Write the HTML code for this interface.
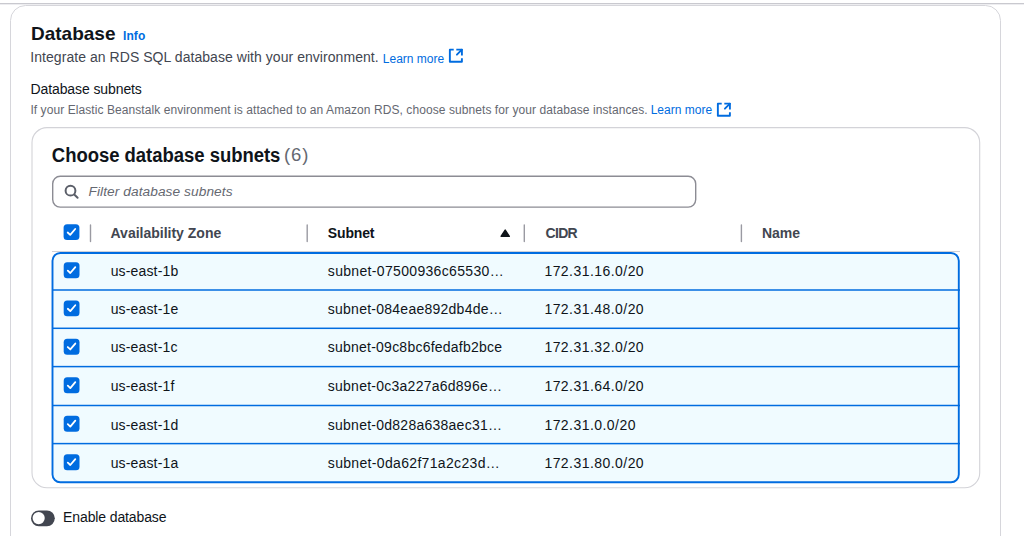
<!DOCTYPE html>
<html><head><meta charset="utf-8"><style>
html,body{margin:0;padding:0;background:#fff;width:1024px;height:536px;overflow:hidden;}
body{position:relative;font-family:"Liberation Sans",sans-serif;}
svg{position:absolute;left:0;top:0;}
.t{position:absolute;white-space:nowrap;}
</style></head><body>
<svg width="1024" height="536" viewBox="0 0 1024 536">
<rect x="0" y="3" width="1024" height="1" fill="#c9c9cf"/>
<rect x="0" y="4" width="1024" height="1" fill="#ededf0"/>
<rect x="10.5" y="5.5" width="990" height="700" rx="15" fill="#fff" stroke="#d6d6db" stroke-width="1"/>
<rect x="32" y="127.6" width="947.7" height="360.2" rx="15" fill="#fff" stroke="#d3d3d8" stroke-width="1.1"/>
<rect x="52.7" y="176.3" width="643" height="30.8" rx="7.5" fill="#fff" stroke="#8c8c94" stroke-width="1.4"/>
<g fill="none" stroke="#5b5f69" stroke-width="2" stroke-linecap="round"><circle cx="70.5" cy="190.7" r="4.9"/><path d="M74.5 194.7 L77.6 197.8"/></g>
<g transform="translate(449,48.8) scale(0.86)" fill="none" stroke="#006ce0" stroke-width="2.2" stroke-linejoin="round"><path d="M5.5 1H1v14h14v-4"/><path d="M8.5 1H15V7.8"/><path d="M15 1L9.2 6.8" stroke-linecap="round"/></g>
<g transform="translate(717,102.8) scale(0.86)" fill="none" stroke="#006ce0" stroke-width="2.2" stroke-linejoin="round"><path d="M5.5 1H1v14h14v-4"/><path d="M8.5 1H15V7.8"/><path d="M15 1L9.2 6.8" stroke-linecap="round"/></g>
<rect x="63.6" y="224.2" width="15.8" height="15.9" rx="3.5" fill="#006ce0"/><path d="M67.70 232.50 L70.20 234.90 L75.20 229.00" fill="none" stroke="#fff" stroke-width="1.8" stroke-linecap="round" stroke-linejoin="round"/>
<line x1="90.5" y1="225" x2="90.5" y2="241.6" stroke="#9a9aa2" stroke-width="1.4" stroke-linecap="round"/>
<line x1="307.2" y1="225" x2="307.2" y2="241.6" stroke="#9a9aa2" stroke-width="1.4" stroke-linecap="round"/>
<line x1="524.3" y1="225" x2="524.3" y2="241.6" stroke="#9a9aa2" stroke-width="1.4" stroke-linecap="round"/>
<line x1="741.4" y1="225" x2="741.4" y2="241.6" stroke="#9a9aa2" stroke-width="1.4" stroke-linecap="round"/>
<path d="M501.1 236.3 L505.2 230.1 L509.3 236.3 Z" fill="#0f141a" stroke="#0f141a" stroke-width="1.5" stroke-linejoin="round"/>
<rect x="52" y="251" width="908" height="1" fill="#d0d0d6"/>
<rect x="52.5" y="253.0" width="906.3" height="229.3" rx="7.8" fill="#f0fbff" stroke="#006ce0" stroke-width="1.9"/>
<rect x="52" y="289.25" width="908" height="1.5" fill="#006ce0"/>
<rect x="52" y="327.55" width="908" height="1.5" fill="#006ce0"/>
<rect x="52" y="365.85" width="908" height="1.5" fill="#006ce0"/>
<rect x="52" y="404.75" width="908" height="1.5" fill="#006ce0"/>
<rect x="52" y="442.85" width="908" height="1.5" fill="#006ce0"/>
<rect x="63.7" y="262.3" width="15.8" height="15.9" rx="3.5" fill="#006ce0"/><path d="M67.80 270.60 L70.30 273.00 L75.30 267.10" fill="none" stroke="#fff" stroke-width="1.8" stroke-linecap="round" stroke-linejoin="round"/>
<rect x="63.7" y="300.45" width="15.8" height="15.9" rx="3.5" fill="#006ce0"/><path d="M67.80 308.75 L70.30 311.15 L75.30 305.25" fill="none" stroke="#fff" stroke-width="1.8" stroke-linecap="round" stroke-linejoin="round"/>
<rect x="63.7" y="338.75000000000006" width="15.8" height="15.9" rx="3.5" fill="#006ce0"/><path d="M67.80 347.05 L70.30 349.45 L75.30 343.55" fill="none" stroke="#fff" stroke-width="1.8" stroke-linecap="round" stroke-linejoin="round"/>
<rect x="63.7" y="377.35" width="15.8" height="15.9" rx="3.5" fill="#006ce0"/><path d="M67.80 385.65 L70.30 388.05 L75.30 382.15" fill="none" stroke="#fff" stroke-width="1.8" stroke-linecap="round" stroke-linejoin="round"/>
<rect x="63.7" y="415.85" width="15.8" height="15.9" rx="3.5" fill="#006ce0"/><path d="M67.80 424.15 L70.30 426.55 L75.30 420.65" fill="none" stroke="#fff" stroke-width="1.8" stroke-linecap="round" stroke-linejoin="round"/>
<rect x="63.7" y="454.3" width="15.8" height="15.9" rx="3.5" fill="#006ce0"/><path d="M67.80 462.60 L70.30 465.00 L75.30 459.10" fill="none" stroke="#fff" stroke-width="1.8" stroke-linecap="round" stroke-linejoin="round"/>
<rect x="31" y="510.5" width="23.8" height="15.7" rx="7.85" fill="#424650"/>
<circle cx="38.65" cy="518.1" r="6.1" fill="#fff"/>
</svg>
<div class="t" style="left:31.00px;top:24.01px;font-size:19px;line-height:19px;color:#0f141a;font-weight:bold;font-style:normal;letter-spacing:0px;">Database</div>
<div class="t" style="left:123.00px;top:30.24px;font-size:12px;line-height:12px;color:#006ce0;font-weight:bold;font-style:normal;letter-spacing:0.1px;">Info</div>
<div class="t" style="left:30.30px;top:50.05px;font-size:14px;line-height:14px;color:#424650;font-weight:normal;font-style:normal;letter-spacing:0.05px;">Integrate an RDS SQL database with your environment.</div>
<div class="t" style="left:382.80px;top:52.54px;font-size:12px;line-height:12px;color:#006ce0;font-weight:normal;font-style:normal;letter-spacing:0px;">Learn more</div>
<div class="t" style="left:30.50px;top:81.65px;font-size:14px;line-height:14px;color:#0f141a;font-weight:normal;font-style:normal;letter-spacing:-0.1px;">Database subnets</div>
<div class="t" style="left:30.40px;top:103.64px;font-size:12px;line-height:12px;color:#656871;font-weight:normal;font-style:normal;letter-spacing:0.075px;">If your Elastic Beanstalk environment is attached to an Amazon RDS, choose subnets for your database instances.</div>
<div class="t" style="left:650.70px;top:103.64px;font-size:12px;line-height:12px;color:#006ce0;font-weight:normal;font-style:normal;letter-spacing:0px;">Learn more</div>
<div class="t" style="left:51.80px;top:146.84px;font-size:18.5px;line-height:18.5px;color:#0f141a;font-weight:bold;font-style:normal;letter-spacing:-0.03px;transform:scaleY(1.06);transform-origin:0 15.66px;">Choose database subnets</div>
<div class="t" style="left:283.90px;top:146.24px;font-size:18.5px;line-height:18.5px;color:#656871;font-weight:normal;font-style:normal;letter-spacing:0.9px;">(6)</div>
<div class="t" style="left:88.50px;top:184.90px;font-size:13.7px;line-height:13.7px;color:#656871;font-weight:normal;font-style:italic;letter-spacing:0.08px;">Filter database subnets</div>
<div class="t" style="left:110.50px;top:225.85px;font-size:14px;line-height:14px;color:#424650;font-weight:bold;font-style:normal;letter-spacing:0px;">Availability Zone</div>
<div class="t" style="left:327.80px;top:225.85px;font-size:14px;line-height:14px;color:#0f141a;font-weight:bold;font-style:normal;letter-spacing:-0.15px;">Subnet</div>
<div class="t" style="left:545.60px;top:225.85px;font-size:14px;line-height:14px;color:#424650;font-weight:bold;font-style:normal;letter-spacing:-0.7px;">CIDR</div>
<div class="t" style="left:761.90px;top:225.85px;font-size:14px;line-height:14px;color:#424650;font-weight:bold;font-style:normal;letter-spacing:0px;">Name</div>
<div class="t" style="left:110.70px;top:263.95px;font-size:14px;line-height:14px;color:#0f141a;font-weight:normal;font-style:normal;letter-spacing:0.15px;">us-east-1b</div>
<div class="t" style="left:327.80px;top:263.95px;font-size:14px;line-height:14px;color:#0f141a;font-weight:normal;font-style:normal;letter-spacing:0.33px;">subnet-07500936c65530…</div>
<div class="t" style="left:544.40px;top:263.95px;font-size:14px;line-height:14px;color:#0f141a;font-weight:normal;font-style:normal;letter-spacing:0.45px;">172.31.16.0/20</div>
<div class="t" style="left:110.70px;top:302.10px;font-size:14px;line-height:14px;color:#0f141a;font-weight:normal;font-style:normal;letter-spacing:0.15px;">us-east-1e</div>
<div class="t" style="left:327.80px;top:302.10px;font-size:14px;line-height:14px;color:#0f141a;font-weight:normal;font-style:normal;letter-spacing:0.25px;">subnet-084eae892db4de…</div>
<div class="t" style="left:544.40px;top:302.10px;font-size:14px;line-height:14px;color:#0f141a;font-weight:normal;font-style:normal;letter-spacing:0.45px;">172.31.48.0/20</div>
<div class="t" style="left:110.70px;top:340.40px;font-size:14px;line-height:14px;color:#0f141a;font-weight:normal;font-style:normal;letter-spacing:0.15px;">us-east-1c</div>
<div class="t" style="left:327.80px;top:340.40px;font-size:14px;line-height:14px;color:#0f141a;font-weight:normal;font-style:normal;letter-spacing:0.23px;">subnet-09c8bc6fedafb2bce</div>
<div class="t" style="left:544.40px;top:340.40px;font-size:14px;line-height:14px;color:#0f141a;font-weight:normal;font-style:normal;letter-spacing:0.45px;">172.31.32.0/20</div>
<div class="t" style="left:110.70px;top:379.00px;font-size:14px;line-height:14px;color:#0f141a;font-weight:normal;font-style:normal;letter-spacing:0.15px;">us-east-1f</div>
<div class="t" style="left:327.80px;top:379.00px;font-size:14px;line-height:14px;color:#0f141a;font-weight:normal;font-style:normal;letter-spacing:0.25px;">subnet-0c3a227a6d896e…</div>
<div class="t" style="left:544.40px;top:379.00px;font-size:14px;line-height:14px;color:#0f141a;font-weight:normal;font-style:normal;letter-spacing:0.45px;">172.31.64.0/20</div>
<div class="t" style="left:110.70px;top:417.50px;font-size:14px;line-height:14px;color:#0f141a;font-weight:normal;font-style:normal;letter-spacing:0.15px;">us-east-1d</div>
<div class="t" style="left:327.80px;top:417.50px;font-size:14px;line-height:14px;color:#0f141a;font-weight:normal;font-style:normal;letter-spacing:0.25px;">subnet-0d828a638aec31…</div>
<div class="t" style="left:544.40px;top:417.50px;font-size:14px;line-height:14px;color:#0f141a;font-weight:normal;font-style:normal;letter-spacing:0.45px;">172.31.0.0/20</div>
<div class="t" style="left:110.70px;top:455.95px;font-size:14px;line-height:14px;color:#0f141a;font-weight:normal;font-style:normal;letter-spacing:0.15px;">us-east-1a</div>
<div class="t" style="left:327.80px;top:455.95px;font-size:14px;line-height:14px;color:#0f141a;font-weight:normal;font-style:normal;letter-spacing:0.33px;">subnet-0da62f71a2c23d…</div>
<div class="t" style="left:544.40px;top:455.95px;font-size:14px;line-height:14px;color:#0f141a;font-weight:normal;font-style:normal;letter-spacing:0.45px;">172.31.80.0/20</div>
<div class="t" style="left:63.10px;top:510.05px;font-size:14px;line-height:14px;color:#0f141a;font-weight:normal;font-style:normal;letter-spacing:-0.12px;">Enable database</div>
</body></html>
